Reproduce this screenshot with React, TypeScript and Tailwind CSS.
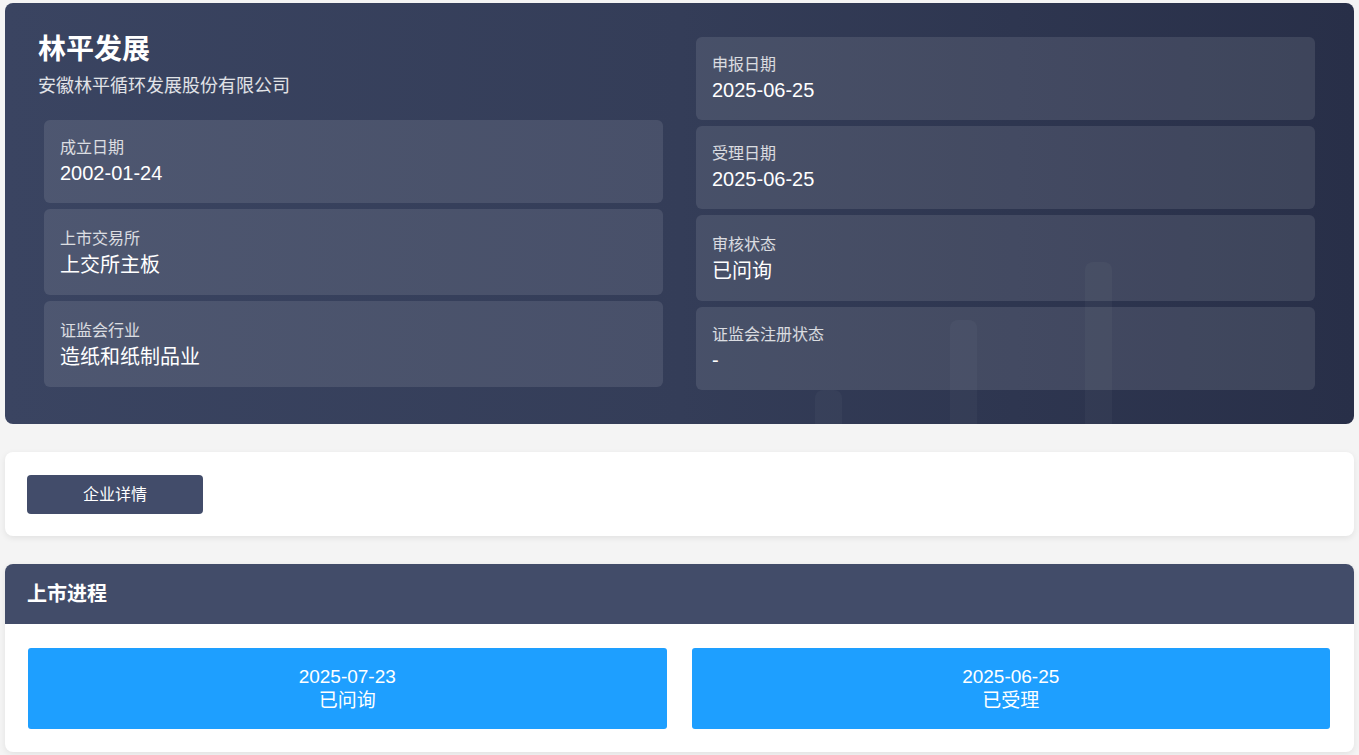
import React from 'react';

type Info = { label: string; value: string; cjk?: boolean };

const leftInfo: Info[] = [
  { label: '成立日期', value: '2002-01-24' },
  { label: '上市交易所', value: '上交所主板', cjk: true },
  { label: '证监会行业', value: '造纸和纸制品业', cjk: true },
];

const rightInfo: Info[] = [
  { label: '申报日期', value: '2025-06-25' },
  { label: '受理日期', value: '2025-06-25' },
  { label: '审核状态', value: '已问询', cjk: true },
  { label: '证监会注册状态', value: '-' },
];

const progress = [
  { date: '2025-07-23', status: '已问询' },
  { date: '2025-06-25', status: '已受理' },
];

const InfoCard: React.FC<{ item: Info }> = ({ item }) => (
  <div
    className={`mx-[6px] my-[3px] rounded-md bg-white/10 px-4 pb-4 ${item.cjk ? 'pt-[19px]' : 'pt-[17px]'}`}
  >
    <div className="text-base leading-[22px] text-white/80">{item.label}</div>
    <div className={`mt-px text-xl text-white ${item.cjk ? 'leading-[28px]' : 'leading-[27px]'}`}>
      {item.value}
    </div>
  </div>
);

const App: React.FC = () => {
  return (
    <div
      className="min-h-screen bg-[#f4f4f4] px-[5px] pt-[3px] pb-[3px]"
      style={{ fontFamily: '"Liberation Sans", "Noto Sans CJK SC", sans-serif' }}
    >
      {/* Company header */}
      <section className="relative overflow-hidden rounded-lg bg-gradient-to-r from-[#3a4461] via-[#343d58] to-[#282f48] px-[33px] pt-[31px] pb-[31px]">
        {/* faint chart bars */}
        <div className="absolute bottom-0 left-[810px] h-[34px] w-[27px] rounded-t-lg bg-white/[0.03]"></div>
        <div className="absolute bottom-0 left-[945px] h-[104px] w-[27px] rounded-t-lg bg-white/[0.03]"></div>
        <div className="absolute bottom-0 left-[1080px] h-[162px] w-[27px] rounded-t-lg bg-white/[0.03]"></div>

        <div className="relative z-10 grid grid-cols-2 gap-[21px]">
          <div className="flex flex-col">
            <h1 className="text-[28px] font-bold leading-8 text-white">林平发展</h1>
            <p className="mt-[7px] text-lg leading-[26px] text-white/85">安徽林平循环发展股份有限公司</p>
            <div className="mt-[18px] flex flex-col">
              {leftInfo.map((item) => (
                <InfoCard key={item.label} item={item} />
              ))}
            </div>
          </div>
          <div className="flex flex-col">
            {rightInfo.map((item) => (
              <InfoCard key={item.label} item={item} />
            ))}
          </div>
        </div>
      </section>

      {/* Actions */}
      <section className="mt-[28px] rounded-lg bg-white px-[22px] pt-[23px] pb-[22px] shadow-[0_2px_6px_rgba(0,0,0,0.08)]">
        <button className="h-[39px] w-[176px] rounded bg-[#424c6a] text-base text-white">企业详情</button>
      </section>

      {/* Listing progress */}
      <section className="mt-[28px] overflow-hidden rounded-lg bg-white shadow-[0_2px_6px_rgba(0,0,0,0.08)]">
        <div className="flex h-[60px] items-center bg-[#424c69] px-[22px]">
          <h2 className="text-xl font-bold text-white">上市进程</h2>
        </div>
        <div className="grid grid-cols-2 gap-[25px] pt-[24px] pr-[24px] pb-[23px] pl-[23px]">
          {progress.map((p) => (
            <div
              key={p.date}
              className="flex h-[81px] flex-col items-center justify-center rounded-[3px] bg-[#1e9fff] text-[19px] leading-6 text-white"
            >
              <div>{p.date}</div>
              <div>{p.status}</div>
            </div>
          ))}
        </div>
      </section>
    </div>
  );
};

export default App;
